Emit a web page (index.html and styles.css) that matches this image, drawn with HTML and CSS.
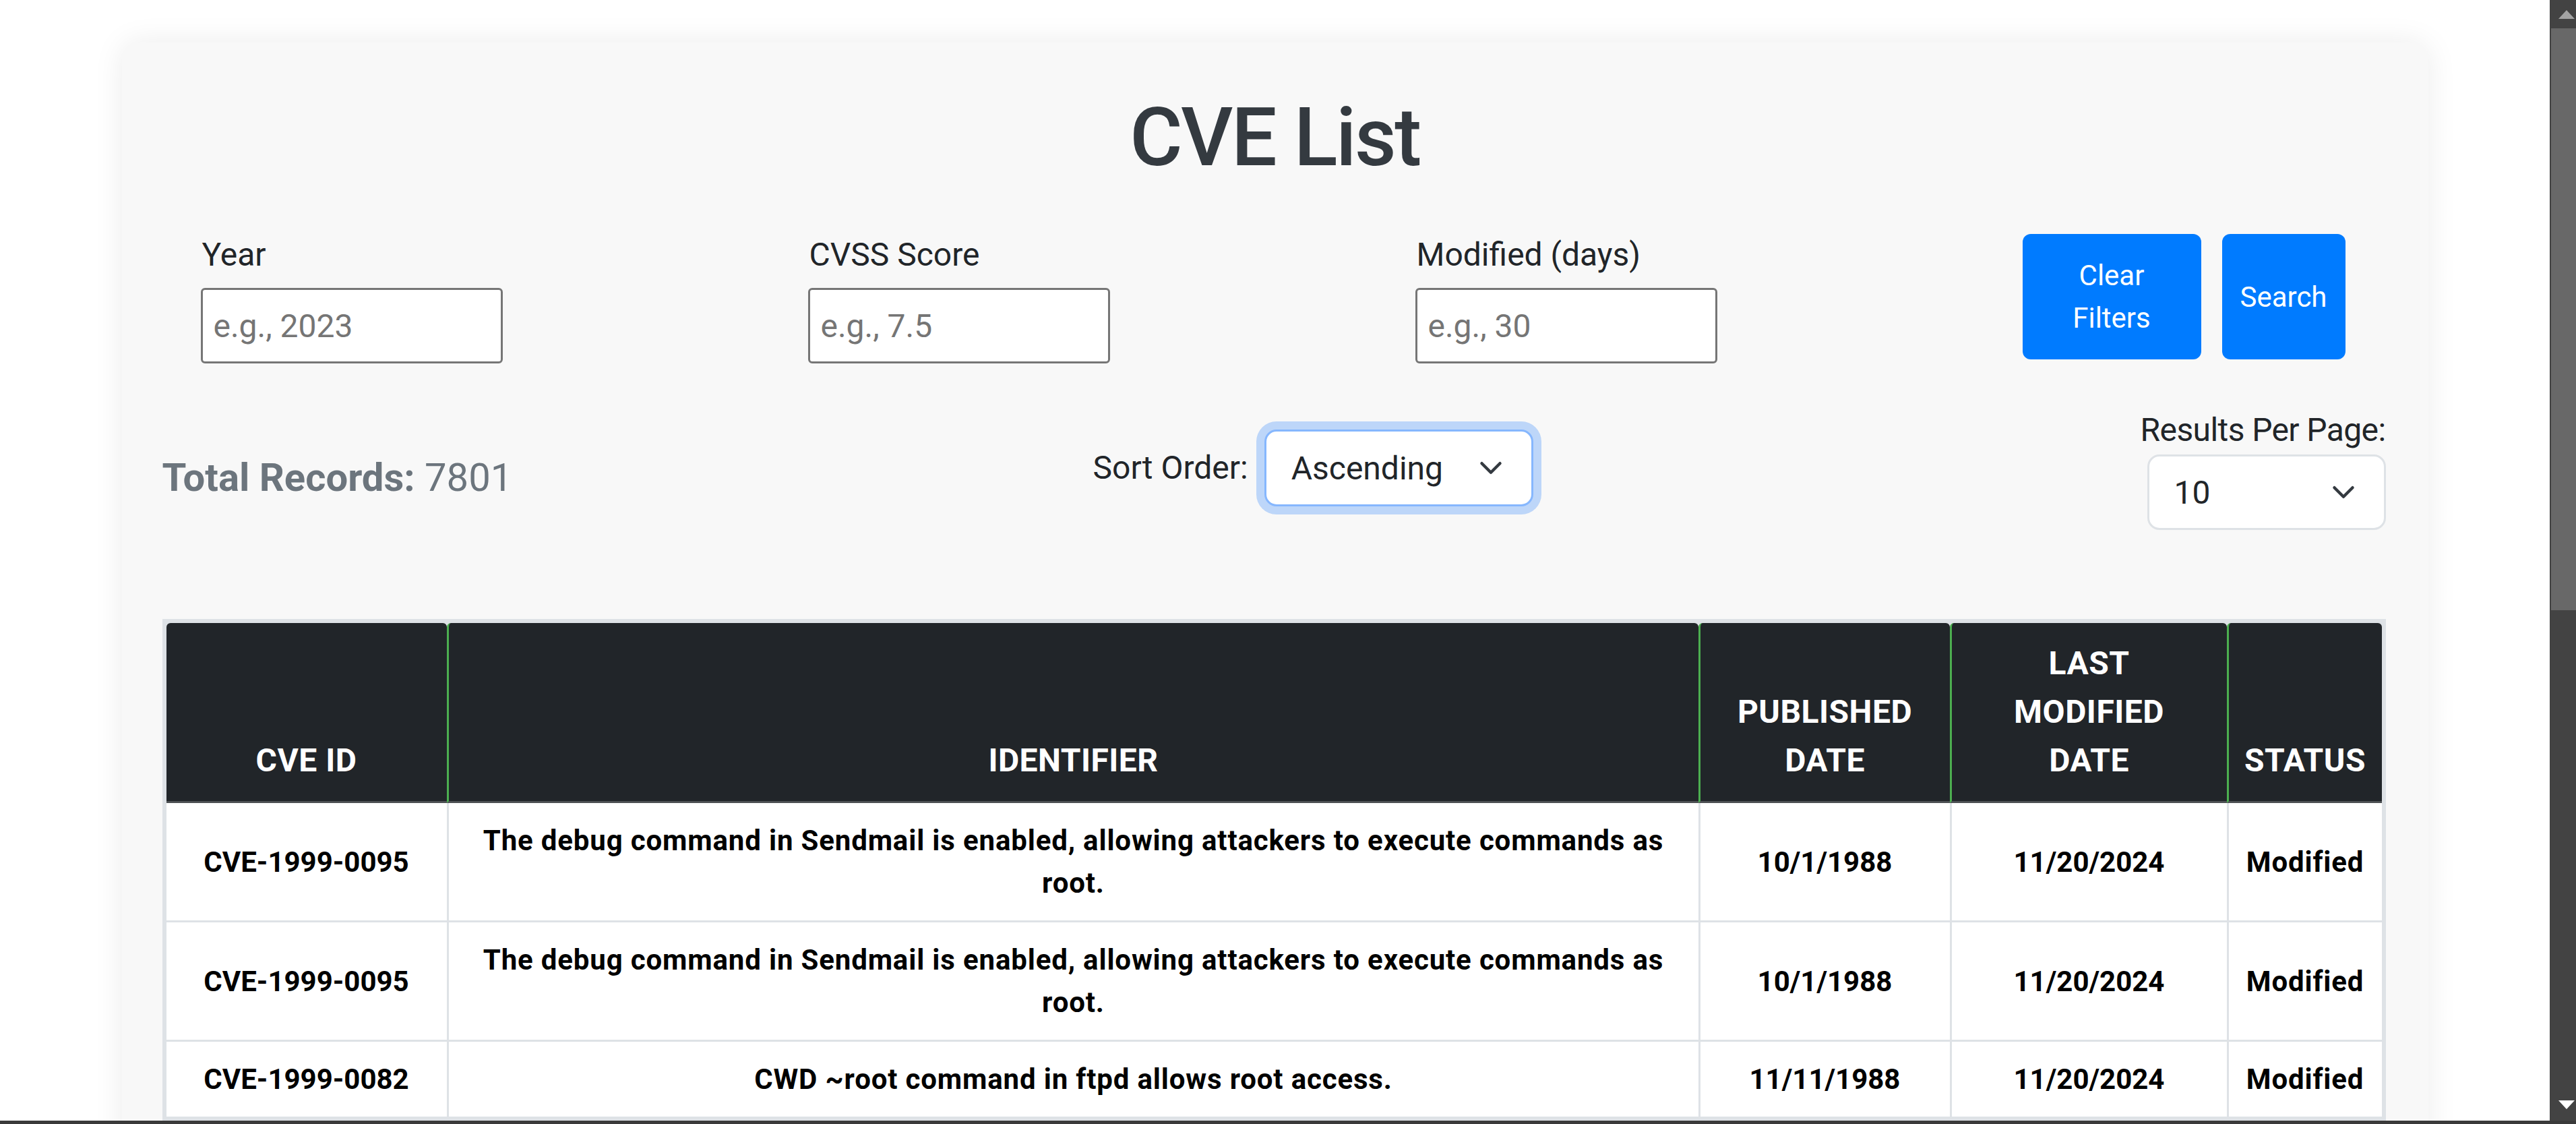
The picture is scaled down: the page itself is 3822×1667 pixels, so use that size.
FILE: index.html
```html
<!DOCTYPE html>
<html lang="en">
<head>
<meta charset="utf-8">
<title>CVE List</title>
<link rel="stylesheet" href="styles.css">
</head>
<body>
<div class="page">
  <div class="card">
    <h1 class="title">CVE List</h1>

    <div class="filters">
      <div class="field">
        <label for="year">Year</label>
        <input id="year" type="text" placeholder="e.g., 2023">
      </div>
      <div class="field">
        <label for="cvss">CVSS Score</label>
        <input id="cvss" type="text" placeholder="e.g., 7.5">
      </div>
      <div class="field">
        <label for="days">Modified (days)</label>
        <input id="days" type="text" placeholder="e.g., 30">
      </div>
      <div class="actions">
        <button class="btn btn-clear" type="button">Clear Filters</button>
        <button class="btn btn-search" type="button">Search</button>
      </div>
    </div>

    <div class="controls">
      <div class="total"><strong>Total Records:</strong> 7801</div>
      <div class="sort">
        <span class="ctl-label">Sort Order:</span>
        <div class="select select-sort">
          <span>Ascending</span>
          <svg class="chev" viewBox="0 0 16 16" width="48" height="36"><path d="M2 5l6 6 6-6" fill="none" stroke="#343a40" stroke-width="2" stroke-linecap="round" stroke-linejoin="round"/></svg>
        </div>
      </div>
      <div class="per-page">
        <span class="ctl-label">Results Per Page:</span>
        <div class="select select-page">
          <span>10</span>
          <svg class="chev" viewBox="0 0 16 16" width="48" height="36"><path d="M2 5l6 6 6-6" fill="none" stroke="#343a40" stroke-width="2" stroke-linecap="round" stroke-linejoin="round"/></svg>
        </div>
      </div>
    </div>

    <table class="cve-table">
      <thead>
        <tr>
          <th class="c1">CVE ID</th>
          <th class="c2">Identifier</th>
          <th class="c3">Published Date</th>
          <th class="c4">Last Modified Date</th>
          <th class="c5">Status</th>
        </tr>
      </thead>
      <tbody>
        <tr>
          <td>CVE-1999-0095</td>
          <td class="txt">The debug command in Sendmail is enabled, allowing attackers to execute commands as root.</td>
          <td>10/1/1988</td>
          <td>11/20/2024</td>
          <td class="txt">Modified</td>
        </tr>
        <tr>
          <td>CVE-1999-0095</td>
          <td class="txt">The debug command in Sendmail is enabled, allowing attackers to execute commands as root.</td>
          <td>10/1/1988</td>
          <td>11/20/2024</td>
          <td class="txt">Modified</td>
        </tr>
        <tr>
          <td>CVE-1999-0082</td>
          <td class="txt">CWD ~root command in ftpd allows root access.</td>
          <td>11/11/1988</td>
          <td>11/20/2024</td>
          <td class="txt">Modified</td>
        </tr>
      </tbody>
    </table>
  </div>
</div>

<div class="vscroll">
  <div class="sb-btn sb-top"><span class="arrow-up"></span></div>
  <div class="sb-thumb"></div>
  <div class="sb-track"></div>
  <div class="sb-btn sb-bottom"><span class="arrow-down"></span></div>
</div>
<div class="hbar"></div>
</body>
</html>
```

FILE: styles.css
```css
html, body {
  margin: 0;
  padding: 0;
}

body {
  background: #ffffff;
  font-family: Roboto, "Liberation Sans", Arial, sans-serif;
  color: #212529;
  height: 1667px;
  overflow: hidden;
}

.page {
  width: 3783px;
}

.card {
  width: 3422px;
  box-sizing: border-box;
  margin: 63px auto 0;
  padding: 69px 60px 60px;
  background: #f8f8f8;
  border-radius: 24px;
  box-shadow: 0 0 45px rgba(0, 0, 0, 0.08);
}

.title {
  margin: 0;
  font-size: 120px;
  line-height: 144px;
  font-weight: 500;
  letter-spacing: -2.5px;
  text-align: center;
  color: #343a40;
}

/* ---------- filters ---------- */
.filters {
  display: flex;
  align-items: flex-start;
  margin-top: 66px;
  padding-left: 57px;
}

.field {
  flex: 0 0 901px;
  display: flex;
  flex-direction: column;
  align-items: flex-start;
}

.field label {
  font-size: 48px;
  line-height: 72px;
  margin-bottom: 13px;
  padding-left: 2px;
}

.field input {
  width: 448px;
  height: 112px;
  box-sizing: border-box;
  border: 3px solid #767676;
  border-radius: 6px;
  padding: 0 16px;
  font-family: Roboto, "Liberation Sans", Arial, sans-serif;
  font-size: 48px;
  color: #212529;
  background: #ffffff;
  outline: none;
}

.field input::placeholder {
  color: #757575;
}

.actions {
  display: flex;
  gap: 31px;
  margin-top: 5px;
  height: 186px;
}

.btn {
  background: #007bff;
  color: #ffffff;
  border: none;
  border-radius: 12px;
  font-family: Roboto, "Liberation Sans", Arial, sans-serif;
  font-size: 42px;
  line-height: 63px;
  padding: 0 30px;
  text-align: center;
}

.btn-clear {
  width: 265px;
}

.btn-search {
  width: 183px;
  padding: 0;
}

/* ---------- controls ---------- */
.controls {
  display: flex;
  align-items: center;
  margin-top: 63px;
}

.total {
  flex: 0 0 1381px;
  margin-top: 30px;
  font-size: 58px;
  line-height: 1.2;
  color: #6c757d;
}

.total strong {
  font-weight: 700;
}

.ctl-label {
  font-size: 48px;
  line-height: 72px;
}

.sort {
  display: flex;
  align-items: center;
  gap: 24px;
}

.select {
  box-sizing: border-box;
  height: 114px;
  border: 3px solid #dee2e6;
  border-radius: 18px;
  background: #ffffff;
  display: flex;
  align-items: center;
  justify-content: space-between;
  padding: 0 36px 0 37px;
  font-size: 48px;
  color: #212529;
}

.chev {
  display: block;
}

.select-sort {
  width: 399px;
  border-color: #86b7fe;
  box-shadow: 0 0 0 12px rgba(13, 110, 253, 0.25);
}

.per-page {
  margin-left: auto;
  margin-right: 3px;
  display: flex;
  flex-direction: column;
  align-items: flex-end;
}

.per-page .ctl-label {
  letter-spacing: -0.6px;
}

.select-page {
  width: 354px;
  height: 112px;
}

/* ---------- table ---------- */
.cve-table {
  margin-top: 132px;
  width: 3299px;
  box-sizing: border-box;
  border-collapse: separate;
  border-spacing: 0;
  border: 6px solid #dee2e6;
  background: #dee2e6;
  table-layout: fixed;
}

.cve-table th {
  box-sizing: border-box;
  background: #212529;
  color: #ffffff;
  font-size: 48px;
  line-height: 72px;
  font-weight: 700;
  letter-spacing: 0.01em;
  text-transform: uppercase;
  text-align: center;
  padding: 24px;
  vertical-align: bottom;
  border-bottom: 3px solid #4d5154;
  border-radius: 6px 6px 0 0;
}

.cve-table th + th {
  border-left: 3px solid #4caf50;
}

.c1 { width: 416px; }
.c2 { width: 1857px; }
.c3 { width: 373px; }
.c4 { width: 411px; }
.c5 { width: 230px; }

.cve-table th.c4 {
  padding-left: 36px;
  padding-right: 36px;
}

.cve-table th.c5 {
  padding-left: 20px;
  padding-right: 20px;
}

.cve-table td {
  box-sizing: border-box;
  background: #ffffff;
  color: #000000;
  font-size: 42px;
  line-height: 63px;
  font-weight: 700;
  padding: 24px;
  text-align: center;
  vertical-align: middle;
}

.cve-table td.txt {
  letter-spacing: 0.02em;
}

.cve-table td + td {
  border-left: 3px solid #dee2e6;
}

.cve-table tbody tr + tr td {
  border-top: 3px solid #dee2e6;
}

/* ---------- fake window scrollbars ---------- */
.vscroll {
  position: fixed;
  top: 0;
  right: 0;
  width: 39px;
  height: 1662px;
  background: #434343;
  display: flex;
  flex-direction: column;
}

.sb-btn {
  display: flex;
  align-items: center;
  padding-left: 13px;
}

.sb-top {
  height: 42px;
}

.sb-bottom {
  height: 47px;
}

.sb-thumb {
  height: 863px;
  margin-left: 2px;
  background: #686868;
}

.sb-track {
  flex: 1;
}

.arrow-up {
  width: 0;
  height: 0;
  border-left: 12.5px solid transparent;
  border-right: 12.5px solid transparent;
  border-bottom: 13px solid #a3a3a3;
}

.arrow-down {
  width: 0;
  height: 0;
  border-left: 12.5px solid transparent;
  border-right: 12.5px solid transparent;
  border-top: 13px solid #ffffff;
}

.hbar {
  position: fixed;
  left: 0;
  right: 0;
  bottom: 0;
  height: 5px;
  background: #3a3a3a;
}
```
